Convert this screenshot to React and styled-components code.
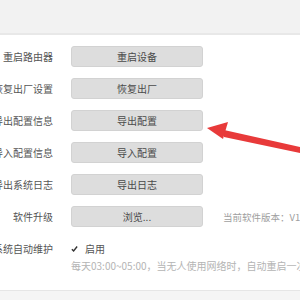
import React from 'react'
import styled, { createGlobalStyle } from 'styled-components'

const GlobalStyle = createGlobalStyle`
  html, body {
    margin: 0;
    padding: 0;
    background: #ffffff;
  }
  body {
    font-family: "Noto Sans CJK SC", "Noto Sans", sans-serif;
  }
`

const Page = styled.div`
  width: 300px;
  height: 300px;
  overflow: hidden;
  position: relative;
  display: flex;
  flex-direction: column;
  background: #fff;
`

const TopBand = styled.div`
  height: 33px;
  background: #f2f2f2;
  border-bottom: 2px solid #e8e8e8;
  flex-shrink: 0;
`

const Form = styled.div`
  display: flex;
  flex-direction: column;
  gap: 11px;
  padding-top: 11px;
`

const Row = styled.div`
  display: flex;
  align-items: center;
  height: 21px;
`

const Label = styled.div`
  width: 53px;
  flex-shrink: 0;
  display: flex;
  justify-content: flex-end;
  white-space: nowrap;
  font-size: 10px;
  color: #555;
  margin-right: 18px;
`

const Button = styled.div`
  width: 130px;
  height: 19px;
  flex-shrink: 0;
  background: #dddddd;
  border: 1px solid #d2d2d2;
  border-radius: 3px;
  display: flex;
  align-items: center;
  justify-content: center;
  font-size: 10px;
  color: #4a4a4a;
`

const Version = styled.div`
  margin-left: 20px;
  white-space: nowrap;
  font-size: 9.5px;
  color: #a0a0a0;
`

const Check = styled.div`
  display: flex;
  align-items: center;
  gap: 7px;
  font-size: 10px;
  color: #555;
`

const Box = styled.span`
  width: 7px;
  height: 7px;
  display: flex;
  align-items: center;
  justify-content: center;
`

const HintRow = styled.div`
  padding-left: 71px;
  margin-top: -12px;
  white-space: nowrap;
  font-size: 10px;
  color: #b4b4b4;
`

const Bottom = styled.div`
  margin-top: auto;
  height: 9px;
  background: #f5f5f5;
  border-top: 1px solid #e6e6e6;
`

const Arrow = styled.svg`
  position: absolute;
  left: 0;
  top: 0;
  pointer-events: none;
`

const rows = [
  ['重启路由器', '重启设备'],
  ['恢复出厂设置', '恢复出厂'],
  ['导出配置信息', '导出配置'],
  ['导入配置信息', '导入配置'],
  ['导出系统日志', '导出日志'],
]

export default function App() {
  return (
    <Page>
      <GlobalStyle />
      <TopBand />
      <Form>
        {rows.map(([label, btn]) => (
          <Row key={label}>
            <Label>{label}</Label>
            <Button>{btn}</Button>
          </Row>
        ))}
        <Row>
          <Label>软件升级</Label>
          <Button>浏览...</Button>
          <Version>当前软件版本：V1.0.0</Version>
        </Row>
        <Row>
          <Label>系统自动维护</Label>
          <Check>
            <Box>
              <svg width="8" height="8" viewBox="0 0 8 8">
                <path d="M1 4.2 L3 6.3 L7 1.2" fill="none" stroke="#333" strokeWidth="1.6" />
              </svg>
            </Box>
            启用
          </Check>
        </Row>
        <HintRow>每天03:00~05:00，当无人使用网络时，自动重启一次路由器</HintRow>
      </Form>
      <Bottom />
      <Arrow width="300" height="300" viewBox="0 0 300 300">
        <polygon points="300,147 224,130 224,137 300,153" fill="#e83a3a" />
        <polygon points="207,128 228,122 223,139" fill="#e83a3a" />
      </Arrow>
    </Page>
  )
}
